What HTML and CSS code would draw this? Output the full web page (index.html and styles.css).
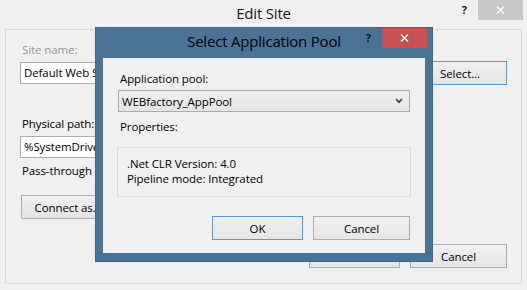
FILE: index.html
```html
<!DOCTYPE html>
<html lang="en">
<head>
    <meta charset="UTF-8">
    <title>Edit Site</title>
    <link rel="stylesheet" href="styles.css">
</head>
<body>

    <div class="window">
        <div class="titlebar">
            <span></span>
            <div class="title">Edit Site</div>
            <div class="caption-buttons">
                <span class="help">?</span>
                <span class="close">
                    <svg width="9" height="8" viewBox="0 0 9 8"><path d="M1 0.5 L8 7.5 M8 0.5 L1 7.5" stroke="#fff" stroke-width="1.4" fill="none"/></svg>
                </span>
            </div>
        </div>

        <div class="panel">
            <div class="site-grid">
                <label class="label disabled">Site name:</label>
                <span></span>
                <span></span>
                <div class="textbox">Default Web Site</div>
                <div class="textbox"></div>
                <button class="btn default">Select...</button>
            </div>

            <label class="label path-label">Physical path:</label>
            <div class="path-row">
                <div class="textbox">%SystemDrive%\inetpub\wwwroot</div>
                <button class="btn small"></button>
            </div>

            <label class="label pass-label">Pass-through</label>
            <div class="connect-row">
                <button class="btn connect">Connect as...</button>
            </div>

            <div class="button-row">
                <button class="btn ok"></button>
                <button class="btn cancel">Cancel</button>
            </div>
        </div>

        <!-- modal on top of the Edit Site window -->
        <div class="dialog">
            <div class="titlebar dialog-titlebar">
                <span></span>
                <div class="title">Select Application Pool</div>
                <div class="caption-buttons">
                    <span class="help">?</span>
                    <span class="close red">
                        <svg width="9" height="8" viewBox="0 0 9 8"><path d="M1 0.5 L8 7.5 M8 0.5 L1 7.5" stroke="#fff" stroke-width="1.4" fill="none"/></svg>
                    </span>
                </div>
            </div>

            <div class="client">
                <label class="label">Application pool:</label>
                <div class="combo">
                    <span>WEBfactory_AppPool</span>
                    <svg width="8" height="6" viewBox="0 0 8 6"><path d="M1 1 L4 4.2 L7 1" stroke="#404040" stroke-width="1.7" fill="none"/></svg>
                </div>

                <label class="label props-label">Properties:</label>
                <div class="props">
                    <div>.Net CLR Version: 4.0</div>
                    <div>Pipeline mode: Integrated</div>
                </div>

                <div class="button-row dialog-buttons">
                    <button class="btn ok default">OK</button>
                    <button class="btn cancel">Cancel</button>
                </div>
            </div>
        </div>
    </div>

</body>
</html>
```

FILE: styles.css
```css
* {
    box-sizing: border-box;
}

body {
    margin: 0;
    font-family: 'Open Sans', 'Noto Sans', sans-serif;
    font-size: 11.5px;
    letter-spacing: -0.1px;
    color: #000;
    background-color: #f0f0f0;
}

.window {
    position: relative;
    width: 527px;
    height: 290px;
    display: flex;
    flex-direction: column;
    overflow: hidden;
    background-color: #f0f0f0;
}

/* title bars */
.titlebar {
    height: 29px;
    flex-shrink: 0;
    display: grid;
    grid-template-columns: 1fr auto 1fr;
    align-items: start;
}

.title {
    font-size: 15px;
    letter-spacing: -0.2px;
    line-height: 20px;
    padding-top: 3px;
    color: #1a1a1a;
}

.caption-buttons {
    justify-self: end;
    display: flex;
    align-items: flex-start;
    margin-right: 4px;
}

.help {
    font-weight: bold;
    font-size: 11px;
    line-height: 20px;
    margin-right: 11px;
    color: #1a1a1a;
}

.close {
    width: 45px;
    height: 20px;
    display: flex;
    align-items: center;
    justify-content: center;
    background-color: #c7c7c7;
}

.close.red {
    background-color: #c75050;
}

/* outer window content */
.panel {
    flex: 1;
    margin: 0 5px 6px;
    border: 1px solid #dadada;
    padding: 12px 14px 15px;
    display: flex;
    flex-direction: column;
}

.label {
    display: block;
    line-height: 16px;
    margin-left: 2px;
    white-space: nowrap;
}

.label.disabled {
    color: #989898;
}

.site-grid {
    display: grid;
    grid-template-columns: 180px 1fr 94px;
    column-gap: 10px;
    row-gap: 3px;
    align-items: center;
}

.textbox {
    height: 22px;
    border: 1px solid #abadb3;
    background-color: #fff;
    padding: 0 3px;
    line-height: 20px;
    white-space: nowrap;
    overflow: hidden;
}

.path-label {
    margin-top: 31px;
}

.path-row {
    display: flex;
    gap: 8px;
    margin-top: 4px;
    width: 320px;
}

.path-row .textbox {
    flex: 1;
}

.pass-label {
    margin-top: 3px;
}

.connect-row {
    display: flex;
    gap: 10px;
    margin-top: 16px;
    margin-left: 1px;
}

.btn {
    height: 24px;
    padding: 0;
    border: 1px solid #acacac;
    background: linear-gradient(#f0f0f0, #e5e5e5);
    font-family: inherit;
    font-size: 11.5px;
    letter-spacing: -0.1px;
    color: #000;
    text-align: center;
    white-space: nowrap;
}

.btn.default {
    border-color: #4e9ce3;
}

.btn.small {
    width: 26px;
}

.btn.connect {
    width: 94px;
}

.btn.ok {
    width: 91px;
}

.btn.cancel {
    width: 97px;
}

.button-row {
    display: flex;
    justify-content: flex-end;
    gap: 10px;
    margin-top: auto;
}

/* Select Application Pool dialog */
.dialog {
    position: absolute;
    left: 95px;
    top: 27px;
    width: 338px;
    height: 235px;
    border: 1px solid #3f6789;
    background-color: #4a7396;
    padding: 0 7px 8px;
    display: flex;
    flex-direction: column;
}

.dialog-titlebar {
    height: 30px;
    margin: 0 -7px;
}

.dialog-titlebar .title {
    color: #000;
}

.dialog-titlebar .caption-buttons {
    margin-right: 5px;
}

.dialog-titlebar .help {
    color: #111;
}

.client {
    flex: 1;
    background-color: #f0f0f0;
    padding: 13px 15px 0;
    display: flex;
    flex-direction: column;
}

.combo {
    height: 22px;
    margin-top: 3px;
    border: 1px solid #acacac;
    background: linear-gradient(#f0f0f0, #e5e5e5);
    padding: 0 6px 0 3px;
    display: flex;
    align-items: center;
    justify-content: space-between;
}

.props-label {
    margin-top: 7px;
}

.props {
    margin: 12px -1px 0;
    border: 1px solid #dcdcdc;
    padding: 8px 9px 10px;
    line-height: 15px;
}

.dialog-buttons {
    margin-top: 19px;
}
```
